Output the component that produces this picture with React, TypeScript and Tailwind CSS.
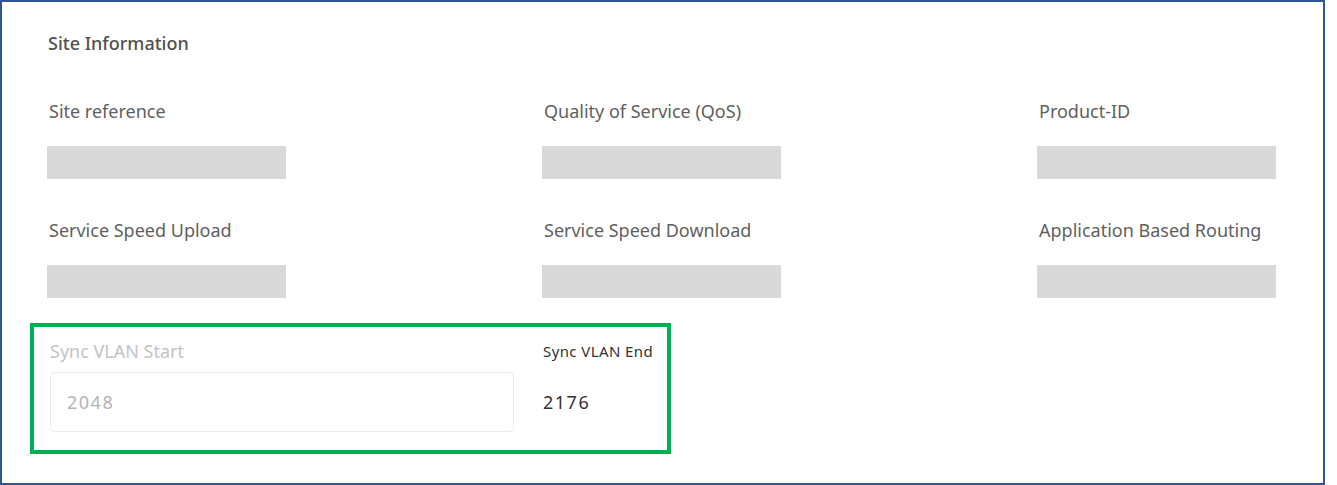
const fields = [
  ["Site reference", "Quality of Service (QoS)", "Product-ID"],
  ["Service Speed Upload", "Service Speed Download", "Application Based Routing"],
];

function Field({ label }: { label: string }) {
  return (
    <div className="flex flex-col">
      <div className="h-6 pl-[2px] text-[18px] leading-6 text-[#5f5f5f]">{label}</div>
      <div className="mt-[23px] h-[33px] w-[239px] bg-[#d9d9d9]"></div>
    </div>
  );
}

export default function App() {
  return (
    <div className="h-[485px] w-[1337px] overflow-hidden bg-white" style={{ fontFamily: '"Noto Sans", "Open Sans", sans-serif' }}>
      <div className="h-[485px] w-[1325px] border-2 border-[#2f5597] pt-[29px]">
        <div className="pl-[46px] text-[18px] font-medium leading-6 text-[#505050]">Site Information</div>

        <div className="mt-[44px] flex flex-col gap-[39px] pl-[45px]">
          {fields.map((row, i) => (
            <div key={i} className="grid grid-cols-[495px_495px_1fr]">
              {row.map((f) => (
                <Field key={f} label={f} />
              ))}
            </div>
          ))}
        </div>

        <div className="ml-[28px] mt-[25px] flex w-[641px] gap-[29px] border-4 border-[#00b050] pb-[18px] pl-4 pt-3">
          <div className="flex flex-col">
            <div className="h-6 text-[18px] leading-6 text-[#c4c4c4]">Sync VLAN Start</div>
            <div className="mt-[9px] flex h-[60px] w-[464px] items-center rounded border border-[#ececec] pl-4 text-[18px] tracking-[1.5px] text-[#b4b4b4]">
              2048
            </div>
          </div>
          <div className="flex flex-col">
            <div className="flex h-6 items-center text-[15px] tracking-[0.4px] text-[#333]">Sync VLAN End</div>
            <div className="mt-[9px] flex h-[60px] items-center text-[18px] tracking-[1.5px] text-[#333]">2176</div>
          </div>
        </div>
      </div>
    </div>
  );
}
